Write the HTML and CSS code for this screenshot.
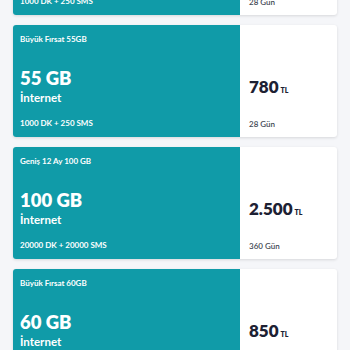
FILE: index.html
```html
<!DOCTYPE html>
<html lang="tr">
<head>
<meta charset="utf-8">
<link rel="stylesheet" href="styles.css">
</head>
<body>
<div class="list">
  <div class="card">
    <div class="main">
      <div class="title">Büyük Fırsat 50GB</div>
      <div class="amount">50 GB</div>
      <div class="kind">İnternet</div>
      <div class="extra">1000 DK + 250 SMS</div>
    </div>
    <div class="side">
      <div class="price">700<span class="cur">TL</span></div>
      <div class="days">28 Gün</div>
    </div>
  </div>
  <div class="card">
    <div class="main">
      <div class="title">Büyük Fırsat 55GB</div>
      <div class="amount">55 GB</div>
      <div class="kind">İnternet</div>
      <div class="extra">1000 DK + 250 SMS</div>
    </div>
    <div class="side">
      <div class="price">780<span class="cur">TL</span></div>
      <div class="days">28 Gün</div>
    </div>
  </div>
  <div class="card">
    <div class="main">
      <div class="title">Geniş 12 Ay 100 GB</div>
      <div class="amount">100 GB</div>
      <div class="kind">İnternet</div>
      <div class="extra">20000 DK + 20000 SMS</div>
    </div>
    <div class="side">
      <div class="price">2.500<span class="cur">TL</span></div>
      <div class="days">360 Gün</div>
    </div>
  </div>
  <div class="card">
    <div class="main">
      <div class="title">Büyük Fırsat 60GB</div>
      <div class="amount">60 GB</div>
      <div class="kind">İnternet</div>
      <div class="extra">1000 DK + 250 SMS</div>
    </div>
    <div class="side">
      <div class="price">850<span class="cur">TL</span></div>
      <div class="days">28 Gün</div>
    </div>
  </div>
</div>
</body>
</html>
```
FILE: styles.css
```css
html, body {
  margin: 0;
  padding: 0;
  background: #f5f6f9;
  overflow: hidden;
  height: 350px;
}
body {
  font-family: Lato, "Open Sans", sans-serif;
}
.list {
  display: flex;
  flex-direction: column;
  gap: 10px;
  padding: 0 13px;
  margin-top: -97px;
}
.card {
  display: flex;
  height: 112px;
  border-radius: 3px;
  overflow: hidden;
  background: #fff;
  box-shadow: 0 1px 3px rgba(0, 0, 0, 0.12);
  flex-shrink: 0;
}
.main {
  width: 227px;
  background: #109ba8;
  color: #fff;
  box-sizing: border-box;
  padding: 9px 7px 0 7px;
  display: flex;
  flex-direction: column;
}
.title {
  font-size: 8px;
  line-height: 11px;
  font-weight: 700;
}
.amount {
  margin-top: 22px;
  font-size: 18.5px;
  line-height: 22px;
  font-weight: 800;
}
.kind {
  margin-top: 1px;
  font-size: 11.5px;
  line-height: 16px;
  font-weight: 700;
}
.extra {
  margin-top: 12px;
  font-size: 8px;
  line-height: 11px;
  font-weight: 700;
}
.side {
  flex: 1;
  box-sizing: border-box;
  padding: 52px 9px 0 9px;
  display: flex;
  flex-direction: column;
}
.price {
  font-size: 17px;
  line-height: 20px;
  font-weight: 800;
  color: #1d2133;
}
.cur {
  font-size: 7px;
  margin-left: 2px;
  font-weight: 800;
}
.days {
  margin-top: 19px;
  font-size: 8px;
  line-height: 11px;
  font-weight: 600;
  color: #444a55;
}
```
